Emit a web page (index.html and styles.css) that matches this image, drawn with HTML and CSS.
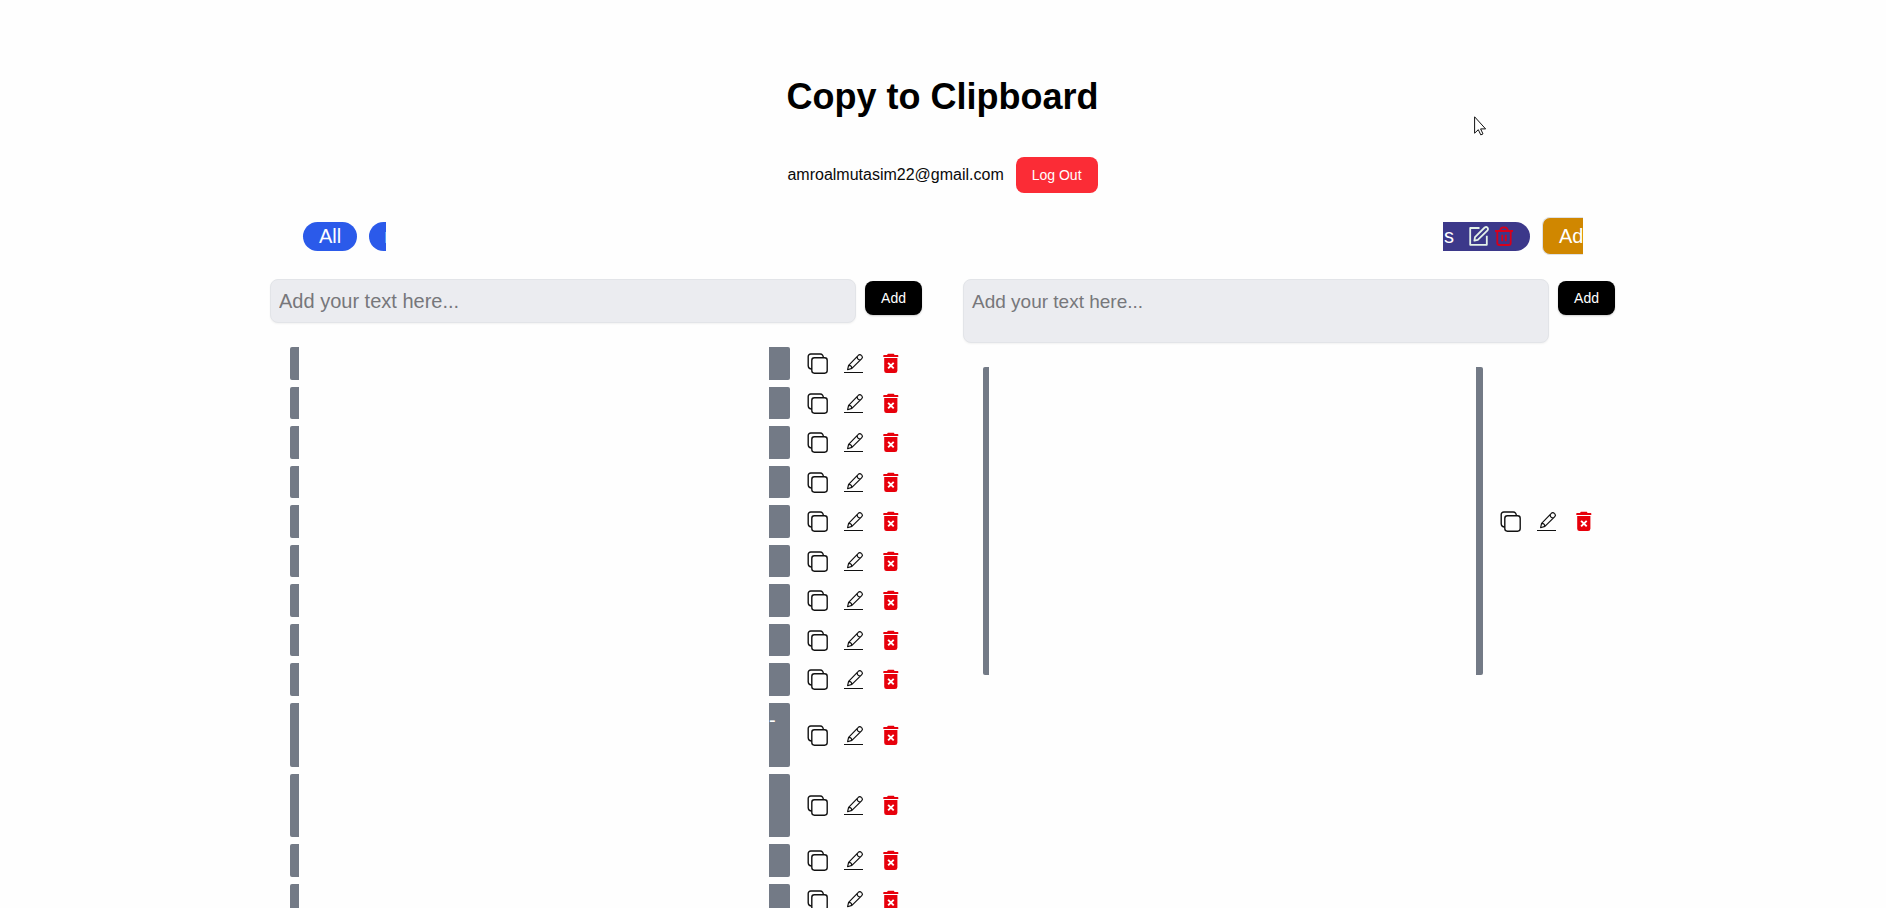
FILE: index.html
```
<!DOCTYPE html>
<html lang="en">
<head>
<meta charset="utf-8">
<title>Copy to Clipboard</title>
<link rel="stylesheet" href="styles.css">
</head>
<body>
<svg class="sprites" aria-hidden="true">
  <symbol id="copy" viewBox="0 0 21 21"><g fill="none" stroke="#111" stroke-width="1.4"><rect x="4.8" y="4.8" width="15.400" height="15.400" rx="2.600"/><path d="M4.800 16A3.600 3.600 0 0 1 1.200 12.600V3.600a2.600 2.600 0 0 1 2.600-2.600h9.400a3 3 0 0 1 3 3.600"/></g></symbol>
  <symbol id="pen" viewBox="0 0 21 21"><g fill="none" stroke="#111" stroke-width="1.2" stroke-linejoin="round"><path d="M4.600 12.400 14.300 2.300a2 2 0 0 1 3 0l.500.500a2 2 0 0 1 0 2.800L7.900 15.400l-4.300 1.300ZM13.200 3.500q-.2 3.500 3.500 3.300M4.600 12.400q3-.2 3.300 3"/><path d="M0 19.500h19" stroke-width="1"/></g></symbol>
  <symbol id="bin" viewBox="0 0 16 21"><path fill="#e7000b" d="M4.200 2c0-.8.600-1.200 1.300-1.200h4.600c.800 0 1.300.4 1.300 1.200h3.300c.4 0 .6.2.6.6V4H.3V2.600c0-.4.2-.6.6-.6ZM1.200 5h13.200v12.700a2.400 2.400 0 0 1-2.400 2.400H3.600a2.400 2.400 0 0 1-2.400-2.400Z"/><path stroke="#fff" stroke-width="1.900" d="m5.100 9.800 5.600 5.600m0-5.600-5.600 5.600"/></symbol>
</svg>

<svg class="cursor" viewBox="0 0 13 20" aria-hidden="true"><path d="M.6.8v16.4l3.7-3.5 2.5 5.2 2.2-1-2.4-5h5Z" fill="#fff" stroke="#111"/></svg>

<main class="page">
  <header class="header">
    <h1 class="title">Copy to Clipboard</h1>
    <div class="account"><span>amroalmutasim22@gmail.com</span><button class="logout">Log Out</button></div>
  </header>

  <nav class="tabs">
    <div class="tab-group">
      <button class="pill">All</button>
      <button class="pill cut-right">n</button>
    </div>
    <div class="tab-group">
      <div class="pill project"><span>s</span>
        <button class="icon-button" aria-label="Rename"><svg class="pill-icon" viewBox="0 0 20 20" fill="none" stroke="#e3f1e8" stroke-width="1.8" stroke-linejoin="round"><path d="M10.500 2H1.200v16.800h16.600v-9"/><path d="m6 11.200 9.700-9.700q1.600-1 2.700.2 1.100 1.200.1 2.600L8.800 13.900l-3.400.8Z"/></svg></button>
        <button class="icon-button" aria-label="Delete"><svg class="pill-icon" viewBox="0 0 20 20" fill="none" stroke="#d5001c" stroke-width="1.8"><path d="M1 5h18M3.300 5v12a2 2 0 0 0 2 2h9.400a2 2 0 0 0 2-2V5M6.200 5c0-2.600 1-3.600 3.800-3.600s3.800 1 3.800 3.600M8.200 8.800v6.500M11.800 8.800v6.500"/></svg></button>
      </div>
      <button class="add-project">Ad</button>
    </div>
  </nav>

  <div class="columns">
    <section class="column">
      <form class="entry"><input class="field" type="text" aria-label="Text" placeholder="Add your text here..."><button class="add" type="button">Add</button></form>
      <ul class="clips" id="clips"></ul>
    </section>
    <section class="column">
      <form class="entry"><textarea class="field area" aria-label="Long text" placeholder="Add your text here..."></textarea><button class="add" type="button">Add</button></form>
      <ul class="clips" id="notes"></ul>
    </section>
  </div>
</main>
<script src="app.js"></script>
</body>
</html>
```
FILE: styles.css
```
* { box-sizing: border-box; }
body { margin: 0; background: #fefefe; color: #0a0a0a; font: 16px/24px "Liberation Sans", Arial, sans-serif; }
html { overflow: hidden; }
button, input, textarea { font: inherit; border: 0; margin: 0; }
button { cursor: pointer; }
.sprites { position: absolute; width: 0; height: 0; }
.cursor { position: absolute; left: 1474px; top: 116px; width: 13px; height: 20px; }

.page { max-width: 1346px; margin: 0 auto; padding: 77px 1px 0 0; }
.header { display: flex; flex-direction: column; align-items: center; gap: 40px; }
.title { margin: 0; font-size: 36px; line-height: 40px; font-weight: 700; color: #000; }
.account { display: flex; align-items: center; gap: 12px; }
.logout { height: 36px; padding: 0 16px; border-radius: 8px; background: #fb2c36; color: #fff; font-size: 14px; }

.tabs { display: flex; justify-content: space-between; align-items: center; padding: 0 32px 0 33px; margin-top: 24px; }
.tab-group { display: flex; align-items: center; gap: 12px; }
.pill { display: flex; align-items: center; height: 29px; padding: 0 16px; border-radius: 15px; background: #2b5aea; color: #fff; font-size: 20px; }
.cut-right { width: 17px; padding: 0 0 0 15px; overflow: hidden; border-radius: 15px 0 0 15px; }
.project { padding: 0 16px 0 1px; border-radius: 0 15px 15px 0; background: #3c388a; }
.project span { margin-right: 15px; }
.icon-button { display: flex; padding: 0; margin-right: 5px; background: none; }
.icon-button:last-child { margin-right: 0; }
.pill-icon { width: 20px; height: 20px; }
.add-project { width: 41px; height: 38px; padding: 0 0 0 16px; text-align: left; border: 1px solid #dfe1e5; border-right: 0; border-radius: 8px 0 0 8px; background: #d08700; color: #fff; font-size: 20px; }

.columns { display: grid; grid-template-columns: 1fr 1fr; gap: 41px; margin-top: 24px; }
.entry { display: flex; align-items: flex-start; gap: 9px; }
.field { flex: 1; min-width: 0; height: 44px; padding: 0 8px; border: 1px solid #e2e4e8; border-radius: 8px; background: #ebecf0; font-size: 20px; box-shadow: 0 1px 2px #0000000d; resize: none; }
.field::placeholder { color: #77777b; opacity: 1; }
.area { height: 64px; padding: 10px 8px; font-size: 19px; }
.add { height: 34px; margin-top: 2px; padding: 0 16px; border-radius: 8px; background: #000; color: #fff; font-size: 14px; box-shadow: 0 1px 2px #0003; }

.clips { list-style: none; display: flex; flex-direction: column; gap: 7px; margin: 0; padding: 24px 23px 0 20px; }
.clip { display: flex; align-items: center; height: 33px; }
.clip:nth-child(even) { height: 32px; }
.clip.two-line { height: 64px; }
.clip.two-line:nth-child(odd) { height: 63px; }
.clip:nth-child(12) { height: 33px; }
.clip.long { height: 308px; }
.text { flex: 1; align-self: stretch; display: flex; justify-content: space-between; }
.edge { width: 9px; border-radius: 2px 0 0 2px; background: #737a86; }
.edge.end { width: 21px; border-radius: 0 2px 2px 0; color: #fff; font-size: 20px; line-height: 34px; }
.long .edge { width: 6px; }
.long .edge.end { width: 7px; }
.actions { display: flex; align-items: center; gap: 16px; margin-left: 17px; }
.actions button { display: flex; padding: 0; background: none; }
.icon { width: 21px; height: 21px; }
.bin { width: 16px; margin-left: 2px; }
```
FILE: app.js
```
const actions = `<div class="actions">
  <button aria-label="Copy"><svg class="icon"><use href="#copy"/></svg></button>
  <button aria-label="Edit"><svg class="icon"><use href="#pen"/></svg></button>
  <button aria-label="Delete"><svg class="icon bin"><use href="#bin"/></svg></button>
</div>`;

const clip = (kind, tail) => `<li class="clip ${kind}">
  <div class="text"><span class="edge"></span><span class="edge end">${tail}</span></div>${actions}
</li>`;

const rows = Array.from({ length: 13 }, (_, i) => clip(i === 9 || i === 10 ? "two-line" : "", i === 9 ? "-" : ""));
document.getElementById("clips").innerHTML = rows.join("");
document.getElementById("notes").innerHTML = clip("long", "");
```
